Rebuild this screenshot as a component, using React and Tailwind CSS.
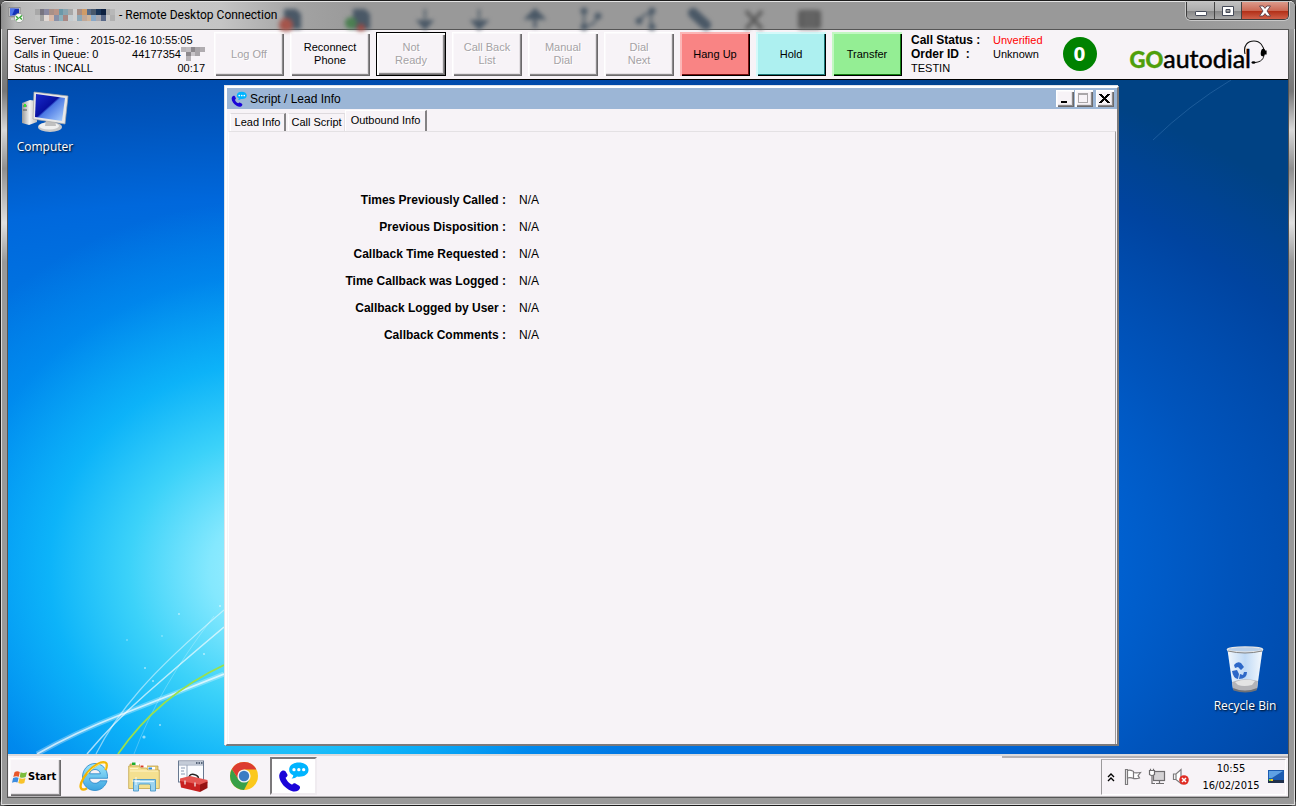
import React from "react";
import clsx from "clsx";

const RAISED =
  "shadow-[inset_1px_1px_0_#ffffff,inset_2px_2px_0_#fbf9fb,inset_-1px_-1px_0_#6b696b,inset_-2px_-2px_0_#8c8a8c,inset_-3px_-3px_0_#e4e0e4]";

const toolbarButtons = [
  { lines: ["Log Off"], disabled: true },
  { lines: ["Reconnect", "Phone"], wide: true },
  { lines: ["Not", "Ready"], disabled: true, outlined: true },
  { lines: ["Call Back", "List"], disabled: true },
  { lines: ["Manual", "Dial"], disabled: true },
  { lines: ["Dial", "Next"], disabled: true },
  {
    lines: ["Hang Up"],
    color:
      "bg-[#f98484] shadow-[inset_2px_2px_0_#fcb6b6,inset_-1px_-1px_0_#000000,inset_-2px_-2px_0_#7a1010]",
  },
  {
    lines: ["Hold"],
    color:
      "bg-[#adf0f0] shadow-[inset_2px_2px_0_#d4fafa,inset_-1px_-1px_0_#000000,inset_-2px_-2px_0_#1a7878]",
  },
  {
    lines: ["Transfer"],
    color:
      "bg-[#94ee94] shadow-[inset_2px_2px_0_#c2f8c2,inset_-1px_-1px_0_#000000,inset_-2px_-2px_0_#128012]",
  },
];

const outboundInfo = [
  ["Times Previously Called", "N/A"],
  ["Previous Disposition", "N/A"],
  ["Callback Time Requested", "N/A"],
  ["Time Callback was Logged", "N/A"],
  ["Callback Logged by User", "N/A"],
  ["Callback Comments", "N/A"],
];

function Mosaic({ colors, columns, className }) {
  return (
    <svg
      className={className}
      viewBox={`0 0 ${columns} ${Math.ceil(colors.length / columns)}`}
      preserveAspectRatio="none"
      shapeRendering="crispEdges"
      aria-hidden="true"
    >
      {colors.map((c, i) =>
        c ? (
          <rect key={i} x={i % columns} y={Math.floor(i / columns)} width="1" height="1" fill={c} />
        ) : null
      )}
    </svg>
  );
}

function RemoteIcon() {
  return (
    <svg className="size-4" viewBox="0 0 16 16" aria-hidden="true">
      <rect x="1" y="0.5" width="11" height="9" fill="#e4e4e4" stroke="#777" strokeWidth=".7" />
      <rect x="2" y="1.5" width="9" height="7" fill="#1430b8" />
      <path d="M2 1.5h5L4 8.5H2z" fill="#4e74e8" />
      <path d="M3 11h7v2H3z" fill="#c8c8c8" />
      <circle cx="11" cy="11" r="4.6" fill="#f6f8f4" stroke="#8b908b" strokeWidth=".7" />
      <path d="M8 9.2l2.2 2L8 13.2M14 8.4l-2.2 2 2.2 2" fill="none" stroke="#38a838" strokeWidth="1.4" />
    </svg>
  );
}

function BlurredGlass() {
  return (
    <svg
      className="pointer-events-none absolute left-0 top-1 h-[25px] w-[840px] blur-[2px]"
      viewBox="0 4 840 25"
      aria-hidden="true"
    >
      <g fill="#4a5866" stroke="#4a5866">
        <path d="M283 7h12l5 5v15h-17z" stroke="none" />
        <path d="M352 7h12l5 5v15h-17z" stroke="none" />
        <path d="M424 7v10M417 19h14l-7 8zM478 7v10M471 19h15l-8 8z" strokeWidth="2" />
        <path d="M534 26V16M526 16l8-8 8 8z" strokeWidth="3" />
        <path d="M583 9v17" strokeWidth="2" fill="none" />
        <path d="M585 24q10-1 11-10" strokeWidth="2" fill="none" />
        <path d="M650 8v18M649 11q-9 2-11 10" strokeWidth="2" fill="none" />
        <circle cx="583" cy="9" r="3" /><circle cx="583" cy="25" r="3" /><circle cx="597" cy="14" r="3" />
        <circle cx="651" cy="9" r="3" /><circle cx="651" cy="25" r="3" /><circle cx="638" cy="19" r="3" />
        <path d="M692 11l13 12" strokeWidth="10" strokeLinecap="round" />
      </g>
      <circle cx="285" cy="23" r="7" fill="#a5554c" />
      <circle cx="350" cy="21" r="6" fill="#4c7f52" />
      <circle cx="360" cy="26" r="4" fill="#994a44" />
      <path d="M745 9l16 18M761 9l-16 18" stroke="#5c5c5c" strokeWidth="4" />
      <rect x="797" y="8" width="23" height="19" rx="3" fill="#5c5c5c" />
      <path d="M802 13h14M802 18h14M802 23h14" stroke="#808080" />
    </svg>
  );
}

function TitleBar() {
  return (
    <header className="relative flex h-[28px] items-start rounded-t-[5px] border-t border-[#e4e4e4] bg-[linear-gradient(90deg,#8e8e8e_0px,#b8b8b8_14px,#cacaca_90px,#c4c4c4_220px,#a2a2a2_300px,#999999_360px,#999999_92%,#a4a4a4_100%)]">
      <BlurredGlass />
      <div className="relative flex h-[26px] flex-1 items-center pl-[7px]">
        <RemoteIcon />
        <Mosaic
          className="ml-[11px] h-[12px] w-[80px]"
          columns={17}
          colors={[
            "#a8a8a8", "#777480", "#8888a0", "#a89088", "#b89488", "#6c98a8", "#88a4b0", "#a8a8a8", "#d0d0d0", "#a88e84", "#d09c68", "#586c88", "#48586c", "#183458", "#0c2040", "#a8a8a8", "#b8b8b8",
            "#c0c0c0", "#a0a0a0", "#e0d8d4", "#d8b8a8", "#8890a8", "#8cb0bc", "#a88884", "#c4ccd0", "#d0d0d0", "#8ca8b8", "#c0a898", "#d0b498", "#88a8c8", "#a8a8b0", "#586888", "#c8c8c8", "#b0b0b0",
          ]}
        />
        <h1 className="ml-[4px] font-['Roboto',sans-serif] text-[12px] leading-4 text-black">
          - Remote Desktop Connection
        </h1>
      </div>
      <div className="relative mr-[6px] flex h-[18px] overflow-hidden rounded-b-[5px] border border-t-0 border-[#3c3c3c] shadow-[0_0_0_1px_#c8c8c8]">
        <button aria-label="Minimize" className="grid w-[28px] place-items-center border-r border-[#444] bg-[linear-gradient(#c0c0c0,#adadad_50%,#858585_51%,#a8a8a8)]">
          <svg width="14" height="14" viewBox="0 0 14 14"><rect x="1.5" y="7.5" width="11" height="4" rx=".6" fill="#fff" stroke="#454a58" /></svg>
        </button>
        <button aria-label="Restore" className="grid w-[27px] place-items-center border-r border-[#444] bg-[linear-gradient(#c0c0c0,#adadad_50%,#858585_51%,#a8a8a8)]">
          <svg width="14" height="14" viewBox="0 0 14 14">
            <path fillRule="evenodd" d="M1.5 2.5h11v9h-11zM5 5.5v3h4v-3z" fill="#fff" stroke="#454a58" />
          </svg>
        </button>
        <button aria-label="Close" className="grid w-[46px] place-items-center bg-[linear-gradient(#dc9a8a,#cc6a56_50%,#b02c14_51%,#d0604a)]">
          <svg width="14" height="14" viewBox="0 0 14 14">
            <path d="M1.5 2h3.6L7 4.4 8.9 2h3.6L9 7l3.5 5H8.9L7 9.6 5.1 12H1.5L5 7z" fill="#fff" stroke="#5a4048" strokeWidth=".9" />
          </svg>
        </button>
      </div>
    </header>
  );
}

function Logo() {
  return (
    <div className="relative flex items-baseline font-['Lato',sans-serif] leading-7">
      <span className="text-[22px] font-black text-[#4f9f0a] [-webkit-text-stroke:0.4px_#4f9f0a]">GO</span>
      <span className="text-[25px] text-black [-webkit-text-stroke:0.5px_#000]">autodial</span>
      <svg className="absolute -right-4 -top-1 h-[26px] w-[24px]" viewBox="0 0 24 26" aria-hidden="true">
        <path d="M2 14C0 5 5 1 11 1s10 5 10 11" fill="none" stroke="#111" strokeWidth="1.1" />
        <path d="M21 14c0 5-3 8-9 8.5" fill="none" stroke="#111" strokeWidth="1" />
        <ellipse cx="20" cy="12.5" rx="2.2" ry="3.8" transform="rotate(8 20 12.5)" fill="#000" />
        <rect x="22" y="10.5" width="1.6" height="4" fill="#000" />
        <ellipse cx="10.5" cy="22.5" rx="2" ry="1.2" fill="#000" />
      </svg>
    </div>
  );
}

function CallBar() {
  return (
    <section className="flex items-center border-b border-black bg-[#f7f3f7] pb-[3px] pl-[6px] pt-[2px]">
      <div className="w-[191px] text-[11px] leading-[14px]">
        <div className="flex gap-[11px]">
          <span>Server Time :</span>
          <span>2015-02-16 10:55:05</span>
        </div>
        <div className="flex">
          <span className="flex-1">Calls in Queue: 0</span>
          <span>44177354</span>
          <Mosaic
            className="h-[14px] w-[24px]"
            columns={5}
            colors={[
              "#b8b4b8", "#c0bcc0", "#8c888c", "#a8a4a8", "#b0acb0",
              null, "#8c888c", "#c8c4c8", "#a8a4a8", null,
              null, "#b4b0b4", null, null, null,
            ]}
          />
        </div>
        <div className="flex justify-between">
          <span>Status : INCALL</span>
          <span>00:17</span>
        </div>
      </div>
      <div className="ml-[9px] flex gap-[6px]">
        {toolbarButtons.map((b) => (
          <button
            key={b.lines.join(" ")}
            disabled={b.disabled}
            className={clsx(
              "h-[44px] text-center text-[11px] leading-[13px]",
              b.wide ? "w-[80px]" : "w-[70px]",
              b.disabled ? "text-[#a5a2a5] [text-shadow:1px_1px_0_#fff]" : "text-black",
              b.color ? b.color : clsx("bg-[#f7f3f7]", RAISED),
              b.outlined && "border border-black"
            )}
          >
            {b.lines.map((line) => (
              <span key={line} className="block">{line}</span>
            ))}
          </button>
        ))}
      </div>
      <dl className="ml-[9px] grid grid-cols-[82px_auto] text-[11px] leading-[14px]">
        <dt className="text-[12px] font-bold">Call Status :</dt>
        <dd className="text-[#ff0000]">Unverified</dd>
        <dt className="text-[12px] font-bold">Order ID &nbsp;:</dt>
        <dd>Unknown</dd>
        <dt>TESTIN</dt>
      </dl>
      <div className="ml-[20px] grid size-[34px] place-items-center rounded-full bg-[#008200] font-['DejaVu_Sans_Condensed','DejaVu_Sans',sans-serif] text-[19px] font-bold leading-5 text-white">
        0
      </div>
      <div className="ml-auto pr-[37px] pt-[10px]">
        <Logo />
      </div>
    </section>
  );
}

function PhoneChatIcon({ className }) {
  return (
    <svg className={className} viewBox="0 0 32 32" aria-hidden="true">
      <path
        d="M2.500 11.500c1.300-2 4-2.400 5.200-.9l1.900 3.200c.6 1.500-.2 2.600-1.800 3.500 1.400 3.600 3.600 5.800 6.800 7.300 1-1.600 2.400-2 3.800-1.200l3.500 2.200c1.400 1.200 1 3.500-1 4.800-2.600 1.700-6 1.500-9.800-.7C5 26.200.8 19.500 1.300 14.800c.1-1.300.5-2.400 1.200-3.300z"
        fill="#1a04d8"
      />
      <path d="M21.500 1.500C27.500 1.500 31.500 4.500 31.500 9s-4 7.200-9.600 7.200c-.8 0-1.500 0-2.200-.2-1.500 1.500-3.500 2.200-5.700 2 1.200-1 1.700-2 1.700-3.300C12.900 13.400 11.500 11.400 11.500 9c0-4.500 4-7.500 10-7.500z" fill="#00b4ff" />
      <circle cx="16.500" cy="9" r="1.700" fill="#fff" />
      <circle cx="21.500" cy="9" r="1.700" fill="#fff" />
      <circle cx="26.500" cy="9" r="1.700" fill="#fff" />
    </svg>
  );
}

function CaptionButton({ label, children, className }) {
  return (
    <button aria-label={label} className={clsx("grid h-[17px] w-[18px] place-items-center bg-[#f7f3f7]", RAISED, className)}>
      <svg width="12" height="12" viewBox="0 0 12 12" shapeRendering="crispEdges">{children}</svg>
    </button>
  );
}

function LeadWindow() {
  return (
    <main className="flex min-w-0 flex-1 flex-col border-2 border-b-[#7b797b] border-l-white border-r-[#7b797b] border-t-white bg-[#f7f3f7] shadow-[-1px_-1px_0_#dfe3ea]">
      <div className="flex h-[21px] items-center bg-[#9cb6d6] pl-[4px] pr-[3px]">
        <PhoneChatIcon className="size-4" />
        <h2 className="ml-[3px] flex-1 text-[12px] leading-4">Script / Lead Info</h2>
        <CaptionButton label="Minimize window"><path d="M2 8h6v2H2z" fill="#000" /></CaptionButton>
        <CaptionButton label="Maximize window" className="ml-px">
          <path d="M0 0h10v10H0zM1 2v7h8V2z" fillRule="evenodd" fill="#a9a6a9" />
        </CaptionButton>
        <CaptionButton label="Close window" className="ml-[3px]">
          <path d="M0 1h3v1h1v1h1v1h1V3h1V2h1V1h3v1h-1v1H9v1H8v1H7v1h1v1h1v1h1v1h1v1H8V9H7V8H6V7H5v1H4v1H3v1H0V9h1V8h1V7h1V6h1V5H3V4H2V3H1V2H0z" fill="#000" />
        </CaptionButton>
      </div>
      <div className="flex h-[22px] items-end pl-[3px] text-[11px] leading-4" role="tablist">
        <button role="tab" aria-selected="false" className="h-[18px] w-[56px] border-l border-r-2 border-t border-l-white border-r-[#848284] border-t-[#dedade] pb-[2px]">
          Lead Info
        </button>
        <button role="tab" aria-selected="false" className="ml-[2px] h-[18px] w-[57px] border-l border-r border-t border-l-white border-r-[#e4e0e4] border-t-[#dedade] pb-[2px]">
          Call Script
        </button>
        <button role="tab" aria-selected="true" className="h-[21px] w-[82px] border-l border-r-2 border-t border-l-white border-r-[#848284] border-t-white pb-[3px]">
          Outbound Info
        </button>
      </div>
      <div role="tabpanel" className="mx-px flex-1 border-l border-r border-t border-l-white border-r-[#9c9a9c] border-t-[#e4e1e4] pt-[54px]">
        <dl className="grid auto-rows-[27px] grid-cols-[277px_auto] items-center gap-x-[13px] leading-4">
          {outboundInfo.map(([label, value]) => (
            <React.Fragment key={label}>
              <dt className="text-right text-[12px] font-bold">{label} :</dt>
              <dd className="text-[12px]">{value}</dd>
            </React.Fragment>
          ))}
        </dl>
      </div>
    </main>
  );
}

function ComputerIcon() {
  return (
    <svg className="h-[44px] w-[48px]" viewBox="0 0 48 44" aria-hidden="true">
      <defs>
        <linearGradient id="screen" x1="0" y1="0" x2="1" y2="1">
          <stop offset="0" stopColor="#1a2ccc" />
          <stop offset=".45" stopColor="#0710a0" />
          <stop offset=".5" stopColor="#4a78e4" />
          <stop offset="1" stopColor="#b0d4ff" />
        </linearGradient>
        <linearGradient id="tower" x1="0" y1="0" x2="1" y2="0">
          <stop offset="0" stopColor="#9a9a9a" />
          <stop offset=".5" stopColor="#f2f2f2" />
          <stop offset="1" stopColor="#bcbcbc" />
        </linearGradient>
      </defs>
      <path d="M1 12l8-3 7 1v21l-8 3-7-2z" fill="url(#tower)" />
      <path d="M2 15h4M2 19h4" stroke="#555" />
      <rect x="3" y="13" width="2" height="3" fill="#35e035" />
      <ellipse cx="29" cy="36" rx="12" ry="5" fill="#c8c8c8" />
      <ellipse cx="28" cy="35" rx="10" ry="3.500" fill="#f0f0f0" />
      <path d="M25 29h9l1 6H24z" fill="#c0c0c0" />
      <path d="M13 1l34 4-3 28-32-5z" fill="#e8e8e8" stroke="#a8a8a8" strokeWidth=".7" />
      <path d="M15 3l29 4-3 23-27-4z" fill="url(#screen)" />
    </svg>
  );
}

function BinIcon() {
  return (
    <svg className="h-[48px] w-[38px]" viewBox="0 0 38 48" aria-hidden="true">
      <defs>
        <linearGradient id="bin" x1="0" y1="0" x2="1" y2="0">
          <stop offset="0" stopColor="#f2f7fc" />
          <stop offset=".5" stopColor="#c0daf6" />
          <stop offset="1" stopColor="#f4f8fc" />
        </linearGradient>
      </defs>
      <path d="M1.500 4h35L31 43q-12 5-24 0z" fill="url(#bin)" />
      <path d="M6 36q12-5 26-1l-1 8q-12 5-24 0z" fill="#b4b4b8" />
      <path d="M9 36q10-4 20-1l-3 4q-8 2-14 0z" fill="#e4e4e4" />
      <path d="M7 42q12 5 24 0l-.5 2.500q-11 4-23 0z" fill="#6f7176" />
      <ellipse cx="19" cy="3.500" rx="17.700" ry="2.600" fill="#b9cfe8" stroke="#e6e6e6" strokeWidth="1.300" />
      <path d="M2 5q17 4 34 0" fill="none" stroke="#777" strokeWidth=".9" />
      <g fill="#2d68c8">
        <path d="M8 19q3-4 7-2l3 4-3 3-3-3-3 1z" />
        <path d="M6 25l5-1 2 4-1 5q-5-1-6-8z" />
        <path d="M13 33l1-5 3 1 1-3h3q0 7-8 7z" />
      </g>
    </svg>
  );
}

function DesktopIcon({ icon, label }) {
  return (
    <button className="flex w-[74px] flex-col items-center gap-[4px] whitespace-nowrap font-['Open_Sans',sans-serif] text-[12px] leading-4 text-white [text-shadow:1px_1px_2px_#000]">
      {icon}
      {label}
    </button>
  );
}

function LightStreaks() {
  return (
    <svg className="pointer-events-none absolute bottom-0 left-0 h-[190px] w-[216px]" viewBox="0 0 216 190" fill="none" aria-hidden="true">
      <path d="M29 190Q66 169 112 151T216 110" stroke="#fff" strokeOpacity=".3" strokeWidth="5" />
      <path d="M29 190Q66 169 112 151T216 110" stroke="#fff" strokeOpacity=".7" strokeWidth="1.800" />
      <path d="M79 190Q104 160 138 130T216 63" stroke="#fff" strokeOpacity=".65" strokeWidth="1.500" />
      <path d="M88 190Q104 158 132 126T216 46" stroke="#fff" strokeOpacity=".5" strokeWidth="1.200" />
      <path d="M126 190Q150 125 206 52" stroke="#fff" strokeOpacity=".25" />
      <path d="M110 190Q150 132 216 101" stroke="#9be04a" strokeWidth="1.800" />
      <g fill="#fff" fillOpacity=".55">
        <circle cx="136" cy="173" r="1.600" /><circle cx="152" cy="161" r="1" /><circle cx="145" cy="117" r="1" />
        <circle cx="137" cy="104" r="1" /><circle cx="196" cy="90" r="1" /><circle cx="171" cy="50" r=".9" />
        <circle cx="119" cy="76" r=".8" /><circle cx="154" cy="72" r=".8" /><circle cx="212" cy="42" r="1" />
      </g>
    </svg>
  );
}

function Desktop() {
  return (
    <div className="flex flex-1 bg-[radial-gradient(ellipse_400px_370px_at_265px_490px,#a4f0ff_0%,#84e8fe_16%,#3cd2f9_36%,rgba(14,184,250,0.9)_56%,rgba(0,150,245,0.5)_80%,rgba(0,130,230,0)_100%),radial-gradient(ellipse_1300px_600px_at_260px_480px,#0096fa_0,#0080e8_32%,#0068dc_60%,#0054bc_74%,#0044a0_88%,#004284_100%)]">
      <div className="relative flex w-[217px] shrink-0 flex-col items-start pt-[11px]">
        <LightStreaks />
        <DesktopIcon icon={<ComputerIcon />} label="Computer" />
      </div>
      <div className="flex min-w-0 flex-1 pb-[8px] pt-[6px]">
        <LeadWindow />
      </div>
      <div className="relative flex w-[169px] shrink-0 flex-col items-end justify-end pb-[40px] pr-[6px]">
        <svg className="pointer-events-none absolute left-0 top-0 h-[90px] w-[169px]" viewBox="0 0 169 90" aria-hidden="true">
          <path d="M34 60Q70 25 112 0" stroke="#6fa8dc" strokeOpacity=".25" fill="none" />
        </svg>
        <DesktopIcon icon={<BinIcon />} label="Recycle Bin" />
      </div>
    </div>
  );
}

function WindowsFlag() {
  return (
    <svg className="h-[15px] w-[16px]" viewBox="0 0 16 15" aria-hidden="true">
      <path d="M2.500 2.200Q5 .6 7.800 2L6.800 6.800Q4 5.600 1.300 7z" fill="#e8562a" />
      <path d="M8.600 2.300q3 1.400 6.400-.2l-1.300 5q-3 1.400-6 .1z" fill="#7cbc3c" />
      <path d="M1.100 7.900Q4 6.500 6.600 7.700l-1.100 4.800Q3 11.300 0 12.700z" fill="#3c8ce0" />
      <path d="M7.500 8.100q3 1.400 6 0l-1.200 4.900q-3 1.300-6 0z" fill="#f8c22c" />
    </svg>
  );
}

function IeIcon() {
  return (
    <svg className="size-[32px]" viewBox="0 0 32 32" aria-hidden="true">
      <defs>
        <linearGradient id="ie" x1="0" y1="0" x2="0" y2="1">
          <stop offset="0" stopColor="#9ce6fc" />
          <stop offset="1" stopColor="#3ba4e0" />
        </linearGradient>
      </defs>
      <path
        fillRule="evenodd"
        d="M17 3.500c7 0 12.500 5.500 12.500 13v1.800H11.500c.3 3.200 2.500 5 5.500 5 2.400 0 4-1 4.900-2.500H29C27.400 26.500 22.800 30.500 17 30.500c-7.500 0-12.500-5.600-12.500-13.400C4.500 9.500 10 3.500 17 3.500zM11.600 13.800h10.800c-.5-2.700-2.600-4.300-5.400-4.300s-4.900 1.600-5.400 4.300z"
        fill="url(#ie)"
        stroke="#2484c8"
        strokeWidth=".8"
      />
      <path d="M27.500 10c1.500-3.500 1.600-6.500-.2-7.300C23.500 1 15.500 5.500 9.500 12.500 3.500 19.500 1 26.800 3.600 29c1.200 1 3.200.5 5.400-.8" fill="none" stroke="#f4b400" strokeWidth="2.400" />
      <path d="M27 9c1-3 1-5 0-5.500C23 2 15 7 9.500 13.500" fill="none" stroke="#ffe478" strokeWidth=".9" />
    </svg>
  );
}

function FolderIcon() {
  return (
    <svg className="size-[32px]" viewBox="0 0 32 32" aria-hidden="true">
      <path d="M2 4h9l1 2h18v5H2z" fill="#ecd078" stroke="#b89a3c" strokeWidth=".7" />
      <path d="M4 2.500h7v3H4z" fill="#fff" /><path d="M4 2.500h3.500v2.500H4z" fill="#1cac2c" />
      <path d="M12 5h7v3h-7z" fill="#fff" /><path d="M12.500 5.500h3v2h-3z" fill="#d83c28" />
      <path d="M20 7h7v3h-7z" fill="#fff" /><path d="M20.500 7.500H24v2h-3.500z" fill="#2c8ce0" />
      <path d="M.7 6h10l2 2h6l1 2h11.600v18.500H.7z" fill="#f4e090" stroke="#c4a44c" strokeWidth=".8" />
      <path d="M2 11h28M2 8.500h8" stroke="#fff4c4" />
      <path d="M5.500 19.500h22V31h-5v-5.500q0-1.500-1.500-1.500h-9q-1.500 0-1.500 1.500V31h-5z" fill="#9cd4f0" stroke="#4a98c8" strokeWidth=".9" />
      <path d="M7 21.500h19" stroke="#e4f6ff" strokeWidth="1.200" />
      <path d="M8 17v8M4 21h8" stroke="#fff" strokeWidth=".8" />
    </svg>
  );
}

function ToolboxIcon() {
  return (
    <svg className="size-[32px]" viewBox="0 0 32 32" aria-hidden="true">
      <rect x="1.500" y="1" width="25" height="21" fill="#fafcff" stroke="#687890" />
      <path d="M2 1.500h24v3H2z" fill="#c4ccd8" />
      <path d="M19 3h1.500M21.500 3H23M24 3h1.500" stroke="#34445c" strokeWidth="1.500" />
      <path d="M4 8h4M4 11h3M4 14h4" stroke="#8898b0" />
      <path d="M10 5v12M2 5h24" stroke="#98a4b8" />
      <path d="M12 17.500c.5-3 2.500-3.500 5-3s4.500 1.200 4.500 4" fill="none" stroke="#222" strokeWidth="1.500" />
      <path d="M3 18.500l10-2.500 17.500 4v3L24 25 3 22z" fill="#e45450" />
      <path d="M3 21l20 3.500V32L4 27.500z" fill="#c82020" />
      <path d="M23 24.500l7.500-3v6.500L23 32z" fill="#961212" />
      <path d="M8 20.500v4M18 22.500v4" stroke="#f0e4e4" strokeWidth="1.300" />
    </svg>
  );
}

function ChromeIcon() {
  return (
    <svg className="size-[30px]" viewBox="0 0 30 30" aria-hidden="true">
      <circle cx="15" cy="15" r="14" fill="#fbc81c" />
      <path d="M9.400 18.300L2.880 8A14 14 0 0 0 15 29l5.600-10.700z" fill="#38a048" />
      <path d="M15 8.500H27.400A14 14 0 0 0 2.880 8L9.400 18.300z" fill="#dc3c30" />
      <circle cx="15" cy="15" r="6.600" fill="#f4f4f4" />
      <circle cx="15" cy="15" r="5.200" fill="#3c7cc4" />
    </svg>
  );
}

function Tray() {
  return (
    <div className="my-px mr-[2px] flex items-center border border-b-white border-l-[#9c9a9c] border-r-white border-t-[#b4b1b4] pl-[4px] pr-px">
      <button aria-label="Show hidden icons" className="grid h-[20px] w-[10px] place-items-center">
        <svg width="8" height="9" viewBox="0 0 8 9" fill="none" stroke="#000" strokeWidth="1.400"><path d="M1 4l3-3 3 3M1 8l3-3 3 3" /></svg>
      </button>
      <button aria-label="Action Center" className="ml-[8px]">
        <svg width="18" height="18" viewBox="0 0 18 18" fill="#fff" stroke="#7c7a7c" strokeWidth="1.200">
          <path d="M1.500 1.500v15h2v-15z" /><path d="M3.500 2.500c3-1 4 0 6 1v7c-2-1-3-1.500-6-.5zM9.500 4.500c2 .6 4 .4 7 0l-2.500 3.200 1.500 2.300c-2 .8-4 .8-6 .4" />
        </svg>
      </button>
      <button aria-label="Network" className="ml-[6px]">
        <svg width="18" height="18" viewBox="0 0 18 18" fill="none" stroke="#6e6c6e" strokeWidth="1.200">
          <rect x="5.500" y="3.500" width="11" height="9" fill="#d4d2d4" /><path d="M8 15.500h8M11.500 12.500v3" />
          <path d="M1.500 2.500h5v4q-2.500 2-5 0z" fill="#fff" /><path d="M2.500 2.500V.8M5.500 2.500V.8M4 8v7.500h3" />
        </svg>
      </button>
      <button aria-label="Volume muted" className="ml-[6px]">
        <svg width="18" height="18" viewBox="0 0 18 18">
          <path d="M1.500 6h2.500l5-4.500v14L4 11.500H1.500zM4 6v5.500" fill="#fff" stroke="#7c7a7c" strokeWidth="1.200" />
          <circle cx="12" cy="12" r="4.800" fill="#e02c24" />
          <path d="M10 10l4 4M14 10l-4 4" stroke="#fff" strokeWidth="1.500" />
        </svg>
      </button>
      <div className="ml-[9px] mr-[5px] w-[64px] text-center font-['DejaVu_Sans_Condensed','DejaVu_Sans',sans-serif] text-[11px] leading-[17px]">
        <div>10:55</div>
        <div>16/02/2015</div>
      </div>
      <button aria-label="Show desktop">
        <svg width="16" height="14" viewBox="0 0 16 14">
          <path d="M0 0h16v11.500H0z" fill="#1c5cb0" /><path d="M1 1h14L4 8H1z" fill="#5ea2e4" />
          <path d="M0 10h16v3H0z" fill="#20304c" /><path d="M1 9h2v2H1z" fill="#7cd63c" /><path d="M3 9h2v2H3z" fill="#f8c22c" />
        </svg>
      </button>
    </div>
  );
}

function Taskbar() {
  return (
    <nav className="flex h-[43px] border-b border-t-2 border-b-[#b8b5b8] border-t-[#dcdadc] bg-[#f7f3f7]">
      <button className={clsx("ml-px mt-[2px] flex h-[38px] w-[52px] items-center bg-[#f7f3f7] pl-[3px] font-['DejaVu_Sans_Condensed','DejaVu_Sans',sans-serif] text-[11px] font-bold leading-4", RAISED)}>
        <WindowsFlag />
        Start
      </button>
      <div className="ml-[17px] flex flex-1 items-center">
        <button aria-label="Internet Explorer"><IeIcon /></button>
        <button aria-label="Windows Explorer" className="ml-[18px]"><FolderIcon /></button>
        <button aria-label="Server Manager" className="ml-[17px]"><ToolboxIcon /></button>
        <button aria-label="Google Chrome" className="ml-[20px]"><ChromeIcon /></button>
        <button aria-label="Script / Lead Info" className="ml-[11px] grid h-[38px] w-[47px] place-items-center border-2 border-b-[#f0ecf0] border-l-[#7b797b] border-r-[#f0ecf0] border-t-[#7b797b] bg-white">
          <PhoneChatIcon className="size-[31px]" />
        </button>
      </div>
      <div className="flex w-[286px] justify-end border-t-2 border-[#b4b1b4]">
        <Tray />
      </div>
    </nav>
  );
}

export default function App() {
  return (
    <div className="bg-[#5a5a5a]">
      <div className="flex min-h-screen flex-col rounded-[7px] border border-[#1c1c1c] bg-[#999999] font-['Liberation_Sans',Arial,sans-serif] text-black shadow-[inset_1px_-1px_0_#dcdcdc]">
        <TitleBar />
        <div className="flex flex-1 bg-[linear-gradient(180deg,#999_0,#777_8%,#d8d8d8_13%,#8f8f8f_18%,#e0e0e0_25%,#999_30%,#999_100%)] px-[6px] pb-[7px] [box-shadow:inset_1px_-1px_0_#dcdcdc,inset_-1px_0_0_#dcdcdc]">
          <div className="flex min-w-0 flex-1 flex-col border border-[#555] bg-[#f7f3f7]">
            <CallBar />
            <Desktop />
            <Taskbar />
          </div>
        </div>
      </div>
    </div>
  );
}
